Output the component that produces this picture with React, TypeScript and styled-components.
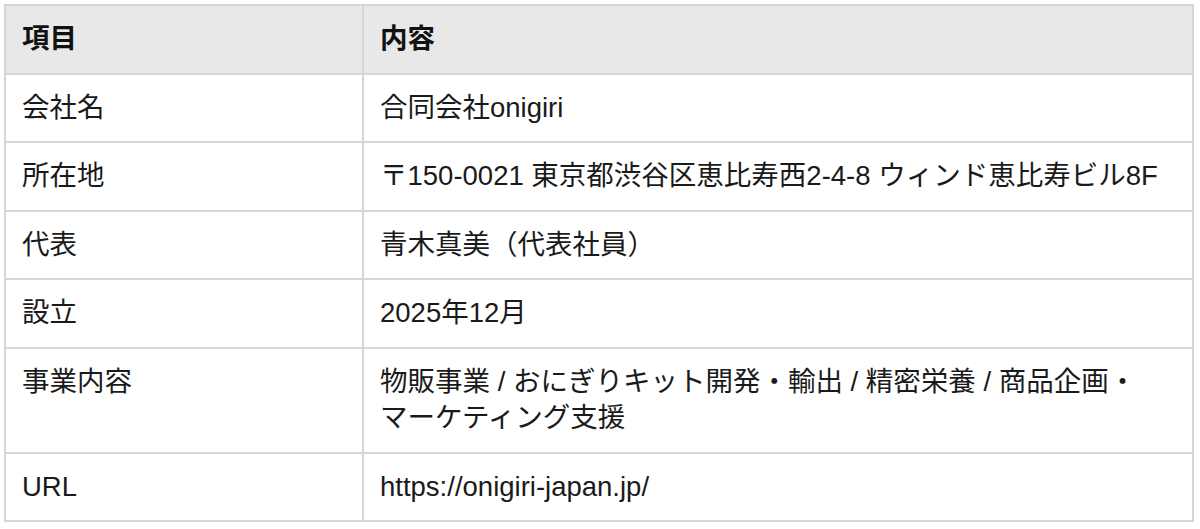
import styled, { createGlobalStyle } from 'styled-components'

const GlobalStyle = createGlobalStyle`
  body {
    margin: 0;
    background: #ffffff;
    font-family: "Liberation Sans", "Noto Sans CJK JP", sans-serif;
    color: #111111;
  }
`

const Wrapper = styled.div`
  padding: 4px 6px 0 4px;
`

const Table = styled.table`
  width: 100%;
  border-collapse: collapse;
  border: 2px solid #d6d6d6;
  font-size: 27.5px;
  line-height: 36.5px;
`

const HeadCell = styled.th<{ $narrow?: boolean }>`
  width: ${(p) => (p.$narrow ? '324px' : 'auto')};
  background: #e8e8e8;
  border: 2px solid #d6d6d6;
  padding: 15px 16px 15px 16px;
  text-align: left;
  font-weight: 700;
  color: #111111;
`

const Cell = styled.td`
  border: 2px solid #d6d6d6;
  padding: 15px 16px;
  vertical-align: top;
  color: #1a1a1a;
`

const rows: { label: string; value: React.ReactNode }[] = [
  { label: '会社名', value: '合同会社onigiri' },
  { label: '所在地', value: '〒150-0021 東京都渋谷区恵比寿西2-4-8 ウィンド恵比寿ビル8F' },
  { label: '代表', value: '青木真美（代表社員）' },
  { label: '設立', value: '2025年12月' },
  {
    label: '事業内容',
    value: (
      <>
        物販事業 / おにぎりキット開発・輸出 / 精密栄養 / 商品企画・
        <br />
        マーケティング支援
      </>
    ),
  },
  { label: 'URL', value: 'https://onigiri-japan.jp/' },
]

export default function App() {
  return (
    <>
      <GlobalStyle />
      <Wrapper>
        <Table>
          <thead>
            <tr>
              <HeadCell $narrow>項目</HeadCell>
              <HeadCell>内容</HeadCell>
            </tr>
          </thead>
          <tbody>
            {rows.map((r) => (
              <tr key={r.label}>
                <Cell>{r.label}</Cell>
                <Cell>{r.value}</Cell>
              </tr>
            ))}
          </tbody>
        </Table>
      </Wrapper>
    </>
  )
}
